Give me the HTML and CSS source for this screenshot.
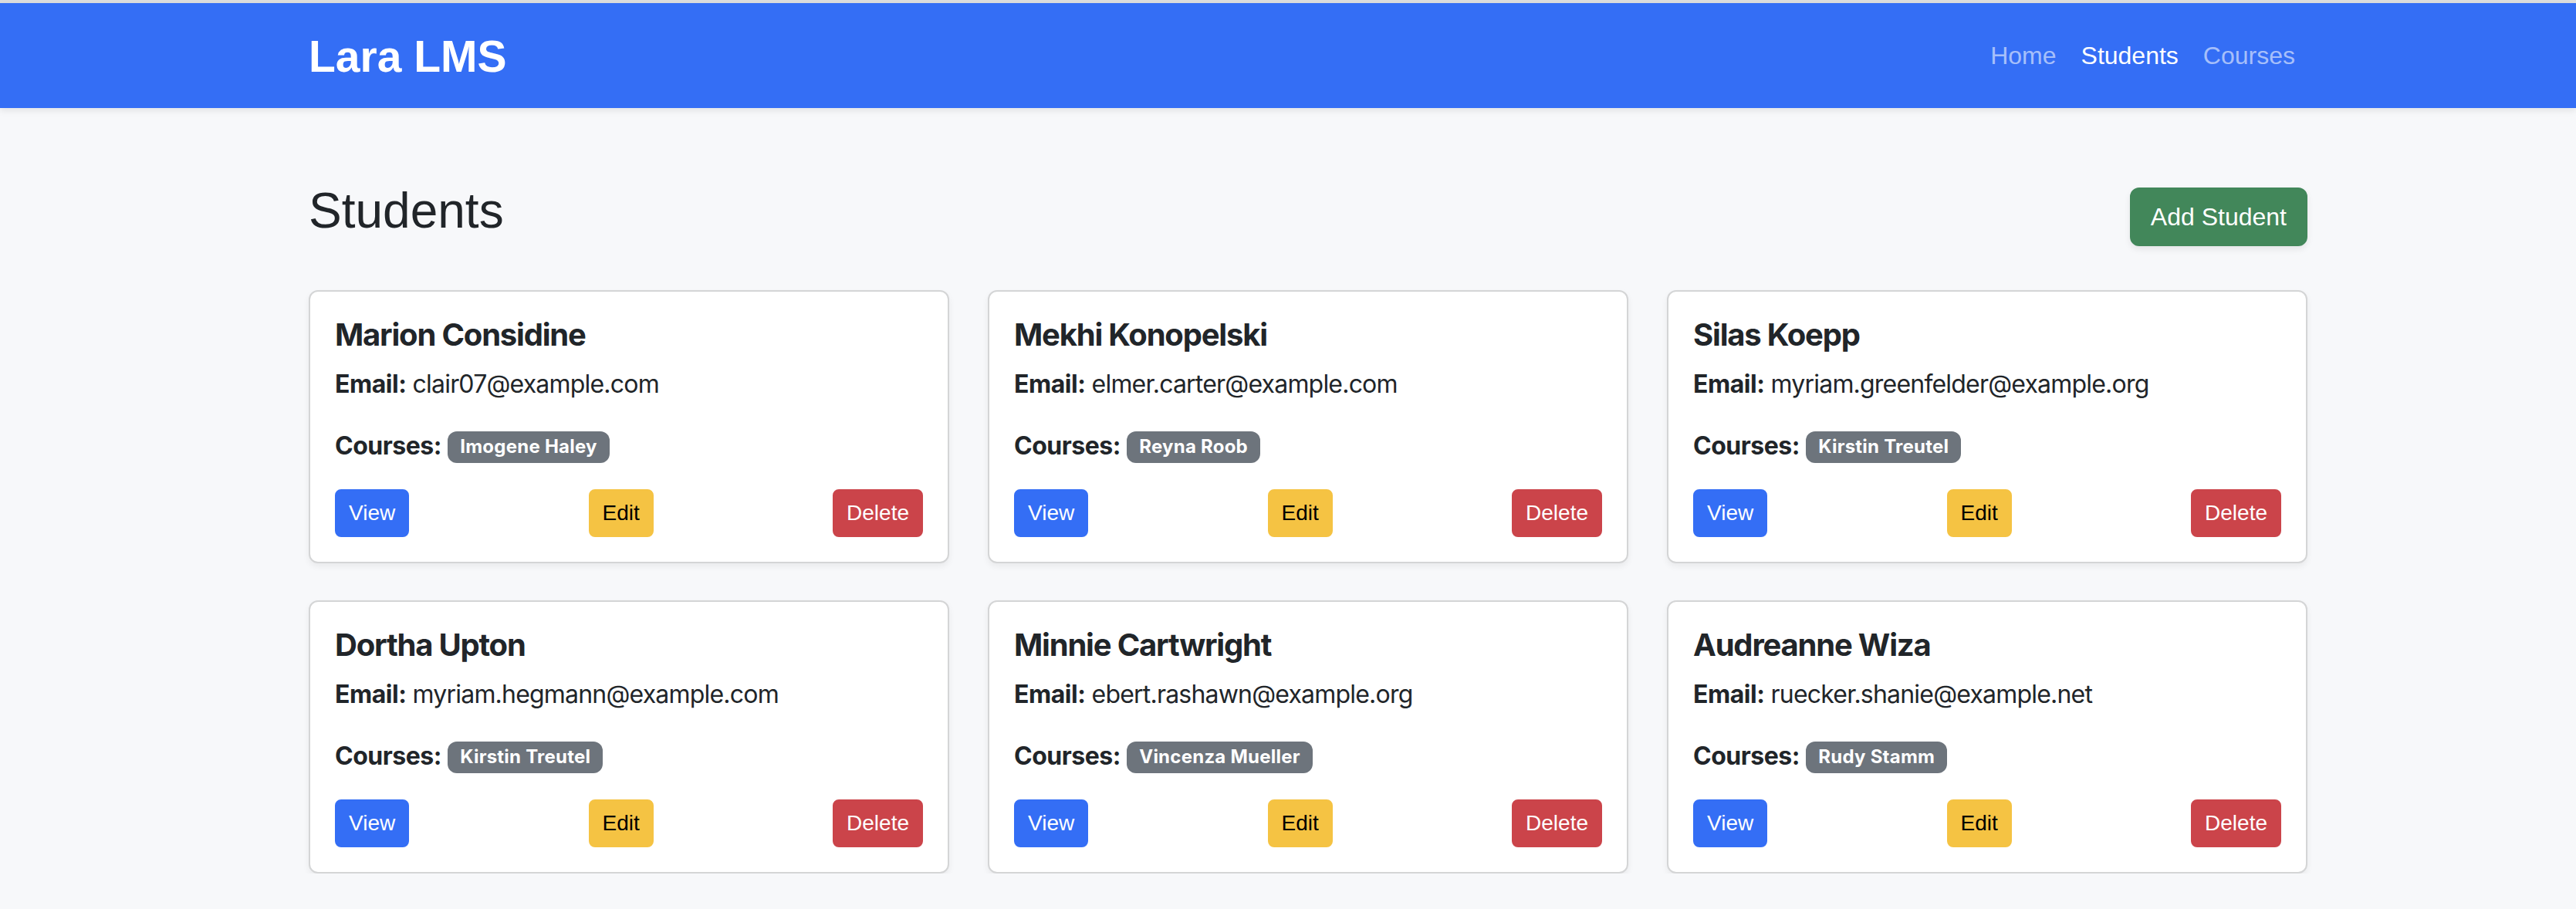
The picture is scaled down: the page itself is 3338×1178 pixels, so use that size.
FILE: index.html
```html
<!DOCTYPE html>
<html lang="en">
<head>
<meta charset="utf-8">
<title>Lara LMS - Students</title>
<link rel="stylesheet" href="styles.css">
</head>
<body>
<div class="topline"></div>
<nav class="navbar">
  <div class="container nav-inner">
    <a class="brand" href="#">Lara LMS</a>
    <ul class="nav-links">
      <li><a class="nav-link" href="#">Home</a></li>
      <li><a class="nav-link active" href="#">Students</a></li>
      <li><a class="nav-link" href="#">Courses</a></li>
    </ul>
  </div>
</nav>
<main class="container">
  <div class="page-head">
    <h2 class="page-title">Students</h2>
    <a class="btn btn-success" href="#">Add Student</a>
  </div>
  <div class="grid">
    <div class="card">
      <h5 class="card-title">Marion Considine</h5>
      <p class="card-line"><strong>Email:</strong> clair07@example.com</p>
      <p class="card-line"><strong>Courses:</strong> <span class="badge">Imogene Haley</span></p>
      <div class="actions">
        <a class="btn-sm btn-primary" href="#">View</a>
        <a class="btn-sm btn-warning" href="#">Edit</a>
        <button class="btn-sm btn-danger">Delete</button>
      </div>
    </div>
    <div class="card">
      <h5 class="card-title">Mekhi Konopelski</h5>
      <p class="card-line"><strong>Email:</strong> elmer.carter@example.com</p>
      <p class="card-line"><strong>Courses:</strong> <span class="badge">Reyna Roob</span></p>
      <div class="actions">
        <a class="btn-sm btn-primary" href="#">View</a>
        <a class="btn-sm btn-warning" href="#">Edit</a>
        <button class="btn-sm btn-danger">Delete</button>
      </div>
    </div>
    <div class="card">
      <h5 class="card-title">Silas Koepp</h5>
      <p class="card-line"><strong>Email:</strong> myriam.greenfelder@example.org</p>
      <p class="card-line"><strong>Courses:</strong> <span class="badge">Kirstin Treutel</span></p>
      <div class="actions">
        <a class="btn-sm btn-primary" href="#">View</a>
        <a class="btn-sm btn-warning" href="#">Edit</a>
        <button class="btn-sm btn-danger">Delete</button>
      </div>
    </div>
    <div class="card">
      <h5 class="card-title">Dortha Upton</h5>
      <p class="card-line"><strong>Email:</strong> myriam.hegmann@example.com</p>
      <p class="card-line"><strong>Courses:</strong> <span class="badge">Kirstin Treutel</span></p>
      <div class="actions">
        <a class="btn-sm btn-primary" href="#">View</a>
        <a class="btn-sm btn-warning" href="#">Edit</a>
        <button class="btn-sm btn-danger">Delete</button>
      </div>
    </div>
    <div class="card">
      <h5 class="card-title">Minnie Cartwright</h5>
      <p class="card-line"><strong>Email:</strong> ebert.rashawn@example.org</p>
      <p class="card-line"><strong>Courses:</strong> <span class="badge">Vincenza Mueller</span></p>
      <div class="actions">
        <a class="btn-sm btn-primary" href="#">View</a>
        <a class="btn-sm btn-warning" href="#">Edit</a>
        <button class="btn-sm btn-danger">Delete</button>
      </div>
    </div>
    <div class="card">
      <h5 class="card-title">Audreanne Wiza</h5>
      <p class="card-line"><strong>Email:</strong> ruecker.shanie@example.net</p>
      <p class="card-line"><strong>Courses:</strong> <span class="badge">Rudy Stamm</span></p>
      <div class="actions">
        <a class="btn-sm btn-primary" href="#">View</a>
        <a class="btn-sm btn-warning" href="#">Edit</a>
        <button class="btn-sm btn-danger">Delete</button>
      </div>
    </div>
  </div>
</main>
</body>
</html>
```
FILE: styles.css
```css
* { box-sizing: border-box; }

html, body { margin: 0; padding: 0; }

body {
  background: #f7f8fa;
  color: #212529;
  font-family: "Inter", "Liberation Sans", sans-serif;
  font-size: 32px;
  line-height: 1.5;
  padding-left: 52px;
  overflow: hidden;
}

.topline {
  height: 4px;
  background: #dcdcdc;
  margin-left: -52px;
}

.container {
  width: 2590px;
  margin: 0 auto;
}

.navbar {
  background: #346ef5;
  height: 136px;
  margin-left: -52px;
  padding-left: 52px;
  box-shadow: 0 4px 8px rgba(0, 0, 0, 0.08);
  position: relative;
  z-index: 1;
}

.nav-inner {
  height: 136px;
  display: flex;
  align-items: center;
  justify-content: space-between;
}

.brand {
  font-family: "Liberation Sans", Arial, sans-serif;
  font-weight: 700;
  font-size: 57px;
  line-height: 1;
  color: #fff;
  text-decoration: none;
  margin-top: 2px;
}

.nav-links {
  list-style: none;
  margin: 0;
  padding: 0;
  display: flex;
}

.nav-link {
  display: block;
  font-family: "Liberation Sans", Arial, sans-serif;
  font-size: 32px;
  line-height: 48px;
  padding: 0 16px;
  color: rgba(255, 255, 255, 0.58);
  text-decoration: none;
}

.nav-link.active { color: #fff; }

.page-head {
  display: flex;
  align-items: center;
  justify-content: space-between;
  margin-top: 95px;
  margin-bottom: 48px;
}

.page-title {
  font-family: "Liberation Sans", Arial, sans-serif;
  font-weight: 400;
  font-size: 64px;
  line-height: 1.2;
  margin: 0 0 16px;
}

.btn {
  display: inline-block;
  font-family: "Liberation Sans", Arial, sans-serif;
  font-size: 32px;
  line-height: 48px;
  padding: 12px 25px;
  border: 2px solid transparent;
  border-radius: 12px;
  color: #fff;
  text-decoration: none;
}

.btn-success {
  background: #42875a;
  border-color: #42875a;
  box-shadow: 0 4px 8px rgba(0, 0, 0, 0.08);
}

.grid {
  display: grid;
  grid-template-columns: repeat(3, 1fr);
  column-gap: 50px;
  row-gap: 48px;
}

.card {
  background: #fff;
  border: 2px solid #d4d5d6;
  border-radius: 12px;
  padding: 32px;
  box-shadow: 0 4px 8px rgba(0, 0, 0, 0.06);
}

.card-title {
  font-size: 40px;
  font-weight: 700;
  line-height: 48px;
  letter-spacing: -0.03em;
  margin: 0 0 16px;
}

.card-line {
  margin: 0 0 32px;
  line-height: 48px;
  letter-spacing: -0.025em;
}

.card-line strong {
  font-weight: 700;
  letter-spacing: -0.015em;
}

.badge {
  display: inline-block;
  background: #6d747c;
  color: #fff;
  font-size: 24px;
  font-weight: 700;
  line-height: 1;
  padding: 8px 16px 9px;
  border-radius: 12px;
  letter-spacing: 0.01em;
  vertical-align: 2px;
}

.actions {
  display: flex;
  justify-content: space-between;
  align-items: center;
}

.btn-sm {
  display: inline-block;
  font-family: "Liberation Sans", Arial, sans-serif;
  font-size: 28px;
  line-height: 42px;
  padding: 8px 16px;
  border: 2px solid transparent;
  border-radius: 8px;
  text-decoration: none;
  cursor: pointer;
}

.btn-primary { background: #346ef5; border-color: #346ef5; color: #fff; }
.btn-warning { background: #f5c343; border-color: #f5c343; color: #000; }
.btn-danger { background: #cb444a; border-color: #cb444a; color: #fff; }
```
